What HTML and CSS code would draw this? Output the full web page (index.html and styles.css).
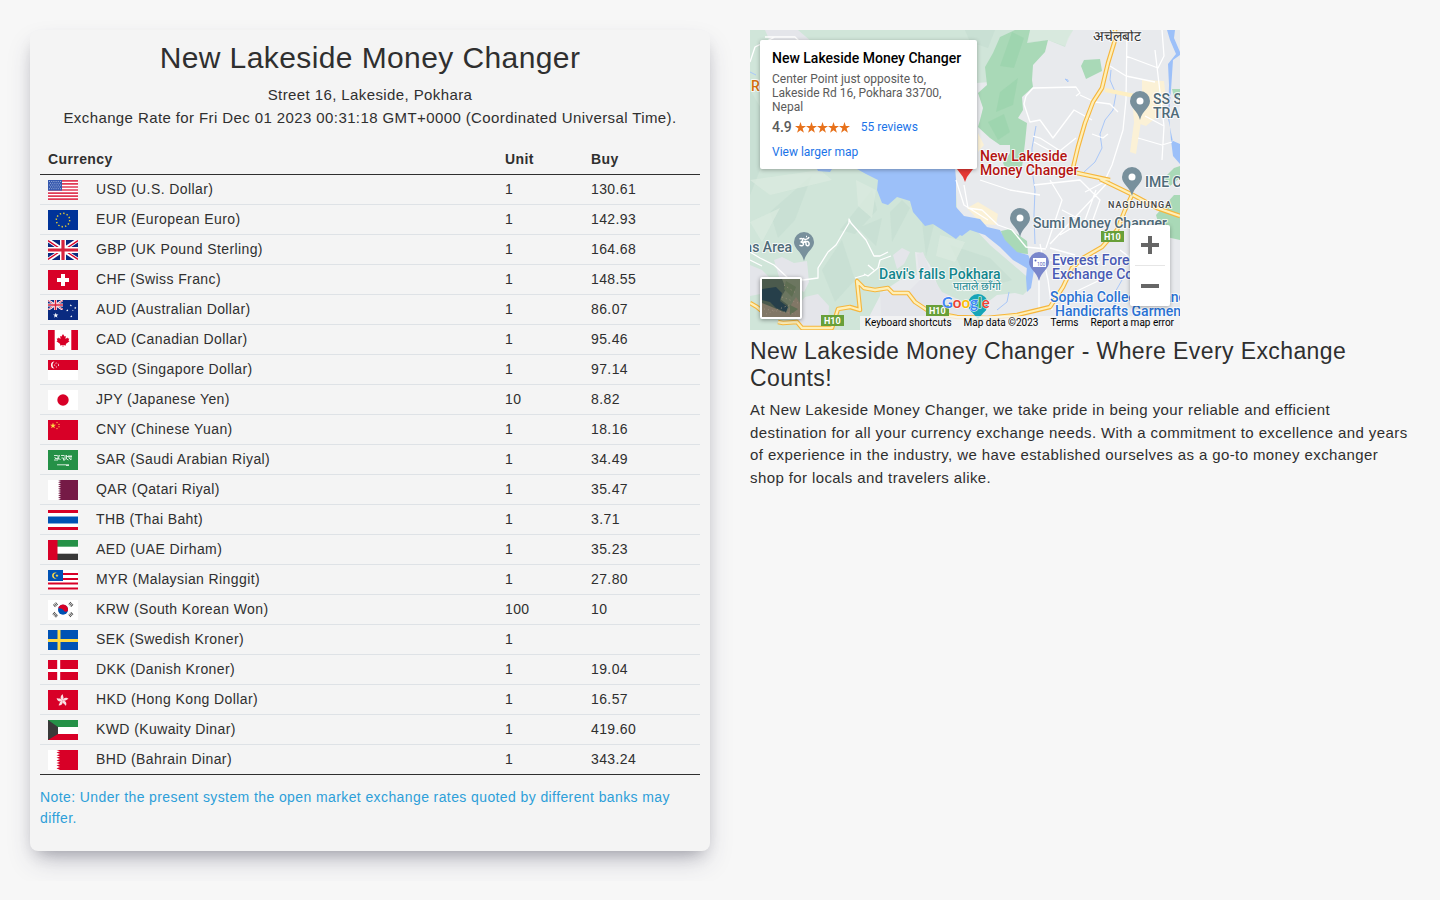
FILE: index.html
```html
<!DOCTYPE html>
<html lang="en">
<head>
<meta charset="utf-8">
<meta name="viewport" content="width=device-width, initial-scale=1">
<title>New Lakeside Money Changer</title>
<link rel="stylesheet" href="styles.css">
</head>
<body>
<svg class="defs" aria-hidden="true">
  <symbol id="jack" viewBox="0 0 30 20" preserveAspectRatio="none">
    <path fill="#0a2a80" d="M0 0h30v20H0z"/>
    <path stroke="#fff" stroke-width="4" d="M0 0l30 20M30 0L0 20"/>
    <path stroke="#d80027" stroke-width="1.3" d="M0 .6l13 8.700M30 19.400l-13-8.700M30 .6l-13 8.700M0 19.400l13-8.700"/>
    <path stroke="#fff" stroke-width="6" d="M15 0v20M0 10h30"/>
    <path stroke="#d8243e" stroke-width="3.200" d="M15 0v20M0 10h30"/>
  </symbol>
  <symbol id="star" viewBox="0 0 10 10"><path d="M5 0l1.200 3.700H10L6.900 6l1.200 3.700L5 7.400 1.900 9.700 3.100 6 0 3.700h3.800z"/></symbol>
  <symbol id="pin" viewBox="0 0 20 29"><path d="M10 0a10 10 0 0 0-10 10c0 7 7.500 9 10 19 2.500-10 10-12 10-19A10 10 0 0 0 10 0z"/></symbol>
</svg>
<main class="page">
  <section class="rates">
    <div class="card">
      <h1 class="title">New Lakeside Money Changer</h1>
      <p class="line">Street 16, Lakeside, Pokhara</p>
      <p class="line">Exchange Rate for Fri Dec 01 2023 00:31:18 GMT+0000 (Coordinated Universal Time).</p>
      <table class="table">
        <colgroup><col class="c-flag"><col><col class="c-unit"><col class="c-buy"></colgroup>
        <thead><tr><th colspan="2">Currency</th><th>Unit</th><th>Buy</th></tr></thead>
        <tbody>
          <tr><td class="flag"><svg viewBox="0 0 30 20"><path fill="#fff" d="M0 0h30v20H0z"/><path stroke="#e03a55" stroke-width="1.700" d="M0 .8h30M0 3.900h30M0 7h30M0 10h30M0 13.100h30M0 16.200h30M0 19.200h30"/><path fill="#3558ae" d="M0 0h14v10.600H0z"/><path stroke="#a9b9df" stroke-width=".9" stroke-dasharray="1 1.200" d="M1 1.500h12M2 3.300h11M1 5.100h12M2 6.900h11M1 8.700h12"/></svg></td><td>USD (U.S. Dollar)</td><td>1</td><td>130.61</td></tr>
          <tr><td class="flag"><svg viewBox="0 0 30 20"><path fill="#003399" d="M0 0h30v20H0z"/><circle cx="15" cy="10" r="6.700" fill="none" stroke="#e3cc34" stroke-width="1.400" stroke-dasharray="1.400 2.108"/></svg></td><td>EUR (European Euro)</td><td>1</td><td>142.93</td></tr>
          <tr><td class="flag"><svg viewBox="0 0 30 20"><use href="#jack" width="30" height="20"/></svg></td><td>GBP (UK Pound Sterling)</td><td>1</td><td>164.68</td></tr>
          <tr><td class="flag"><svg viewBox="0 0 30 20"><path fill="#d80027" d="M0 0h30v20H0z"/><path stroke="#fff" stroke-width="4" d="M15 4v12M9 10h12"/></svg></td><td>CHF (Swiss Franc)</td><td>1</td><td>148.55</td></tr>
          <tr><td class="flag"><svg viewBox="0 0 30 20"><path fill="#0a2a80" d="M0 0h30v20H0z"/><use href="#jack" width="15" height="10"/><g fill="#fff"><use href="#star" x="5" y="12.500" width="5.500" height="5.500"/><use href="#star" x="21.500" y="4" width="2.600" height="2.600"/><use href="#star" x="26" y="6.500" width="2.600" height="2.600"/><use href="#star" x="18" y="9" width="2.600" height="2.600"/><use href="#star" x="22" y="15" width="2.600" height="2.600"/><use href="#star" x="24" y="9.500" width="1.800" height="1.800"/></g></svg></td><td>AUD (Australian Dollar)</td><td>1</td><td>86.07</td></tr>
          <tr><td class="flag"><svg viewBox="0 0 30 20"><path fill="#fff" d="M0 0h30v20H0z"/><path fill="#d80027" d="M0 0h6.700v20H0zM23.300 0H30v20h-6.700zM15 4l1.500 2.600 1.300-.5-.3 3 2-1.500.4 1 1.400-.2-.8 2 1 .8-3.700 2.900.2 1.300-2.700-.4V17h-.6v-2l-2.700.4.2-1.300-3.700-2.900 1-.8-.8-2 1.400.2.400-1 2 1.500-.3-3 1.300.5z"/></svg></td><td>CAD (Canadian Dollar)</td><td>1</td><td>95.46</td></tr>
          <tr><td class="flag"><svg viewBox="0 0 30 20"><path fill="#fff" d="M0 0h30v20H0z"/><path fill="#d80027" d="M0 0h30v10H0z"/><path fill="#fff" d="M6.500 1.500a3.500 3.500 0 1 0 0 7 4 4 0 0 1 0-7z"/><circle cx="8.600" cy="5" r="2" fill="none" stroke="#fff" stroke-width="1" stroke-dasharray="1 1.510"/></svg></td><td>SGD (Singapore Dollar)</td><td>1</td><td>97.14</td></tr>
          <tr><td class="flag"><svg viewBox="0 0 30 20"><path fill="#fff" d="M0 0h30v20H0z"/><circle cx="15" cy="10" r="5.700" fill="#d80027"/></svg></td><td>JPY (Japanese Yen)</td><td>10</td><td>8.82</td></tr>
          <tr><td class="flag"><svg viewBox="0 0 30 20"><path fill="#d80027" d="M0 0h30v20H0z"/><g fill="#ffda44"><use href="#star" x="2" y="2.500" width="6" height="6"/><use href="#star" x="8" y="1.500" width="2" height="2"/><use href="#star" x="10" y="3.200" width="2" height="2"/><use href="#star" x="10" y="5.800" width="2" height="2"/><use href="#star" x="8" y="7.500" width="2" height="2"/></g></svg></td><td>CNY (Chinese Yuan)</td><td>1</td><td>18.16</td></tr>
          <tr><td class="flag"><svg viewBox="0 0 30 20"><path fill="#259147" d="M0 0h30v20H0z"/><path fill="none" stroke="#d5ebdb" stroke-width="1" d="M6 5.500h3.500M6.500 7.500l2 1M6 10h4M10 5v5M11.500 5l-1 3 2 2M13 5.500h3M13.500 8h2v2M17 5v5h-2M18.500 5v4l2 1M21 5v3l2 2M23 5v5M19 6.500h5M7 8.500h4M9 14.800h12M18 15.500h3"/></svg></td><td>SAR (Saudi Arabian Riyal)</td><td>1</td><td>34.49</td></tr>
          <tr><td class="flag"><svg viewBox="0 0 30 20"><path fill="#fff" d="M0 0h30v20H0z"/><path fill="#751a46" d="M30 0H10l3 1.100-3 1.100 3 1.100-3 1.100 3 1.100-3 1.100 3 1.100-3 1.100 3 1.100-3 1.100 3 1.100-3 1.100 3 1.100-3 1.100 3 1.100-3 1.100 3 1.100-3 1.300h20z"/></svg></td><td>QAR (Qatari Riyal)</td><td>1</td><td>35.47</td></tr>
          <tr><td class="flag"><svg viewBox="0 0 30 20"><path fill="#fff" d="M0 0h30v20H0z"/><path fill="#d80027" d="M0 0h30v3H0zM0 17h30v3H0z"/><path fill="#0052b4" d="M0 6.500h30v7H0z"/></svg></td><td>THB (Thai Baht)</td><td>1</td><td>3.71</td></tr>
          <tr><td class="flag"><svg viewBox="0 0 30 20"><path fill="#fff" d="M0 0h30v20H0z"/><path fill="#259147" d="M0 0h30v6.700H0z"/><path fill="#393939" d="M0 13.700h30V20H0z"/><path fill="#d80027" d="M0 0h9.500v20H0z"/></svg></td><td>AED (UAE Dirham)</td><td>1</td><td>35.23</td></tr>
          <tr><td class="flag"><svg viewBox="0 0 30 20"><path fill="#fff" d="M0 0h30v20H0z"/><path stroke="#d80027" stroke-width="2" d="M15 4h15M15 9h15M0 13.500h30M0 18.500h30"/><path fill="#0052b4" d="M0 0h15v11H0z"/><path fill="#ffda44" d="M7.500 2.500a3.100 3.100 0 1 0 1.500 5.600 2.600 2.600 0 1 1 0-5z"/><use href="#star" x="7.200" y="3.700" width="3.500" height="3.500" fill="#ffda44"/></svg></td><td>MYR (Malaysian Ringgit)</td><td>1</td><td>27.80</td></tr>
          <tr><td class="flag"><svg viewBox="0 0 30 20"><path fill="#fff" d="M0 0h30v20H0z"/><circle cx="15" cy="9.700" r="5" fill="#0052b4"/><path fill="#d80027" d="M10.200 8.300a5 5 0 0 1 9.700 2.500c-1.500 1.600-3.500 1.200-4.600-.8-1.200-1.900-3.600-1.500-5.100-1.700z"/><g stroke="#444" stroke-width="3.200" stroke-dasharray=".9 .6"><path d="M6 6l3-2.500M21.500 3l3 3M5.500 13l3.500 3.500M21.500 16l3-3"/></g></svg></td><td>KRW (South Korean Won)</td><td>100</td><td>10</td></tr>
          <tr><td class="flag"><svg viewBox="0 0 30 20"><path fill="#0052b4" d="M0 0h30v20H0z"/><path stroke="#ffda44" stroke-width="3" d="M11 0v20M0 10.500h30"/></svg></td><td>SEK (Swedish Kroner)</td><td>1</td><td></td></tr>
          <tr><td class="flag"><svg viewBox="0 0 30 20"><path fill="#d80027" d="M0 0h30v20H0z"/><path stroke="#fff" stroke-width="3" d="M10.700 0v20M0 10.500h30"/></svg></td><td>DKK (Danish Kroner)</td><td>1</td><td>19.04</td></tr>
          <tr><td class="flag"><svg viewBox="0 0 30 20"><path fill="#d80027" d="M0 0h30v20H0z"/><g transform="translate(14.500 10.500)" fill="#f9dfe4"><path id="petal" d="M0 0c-2.500-1.500-2.500-5 .5-6.300-.5 2 1.800 3.500-.5 6.300z"/><use href="#petal" transform="rotate(72)"/><use href="#petal" transform="rotate(144)"/><use href="#petal" transform="rotate(216)"/><use href="#petal" transform="rotate(288)"/></g></svg></td><td>HKD (Hong Kong Dollar)</td><td>1</td><td>16.57</td></tr>
          <tr><td class="flag"><svg viewBox="0 0 30 20"><path fill="#fff" d="M0 0h30v20H0z"/><path fill="#259147" d="M0 0h30v7H0z"/><path fill="#d80027" d="M0 14h30v6H0z"/><path fill="#393939" d="M0 0l10 7v7L0 20z"/></svg></td><td>KWD (Kuwaity Dinar)</td><td>1</td><td>419.60</td></tr>
          <tr><td class="flag"><svg viewBox="0 0 30 20"><path fill="#fff" d="M0 0h30v20H0z"/><path fill="#d80027" d="M30 0H8.500L12 1.300 8.500 2.600 12 3.900 8.500 5.200 12 6.500 8.500 7.800 12 9.100 8.500 10.400 12 11.700 8.500 13 12 14.300 8.500 15.600 12 16.900 8.500 18.200 12 20h18z"/></svg></td><td>BHD (Bahrain Dinar)</td><td>1</td><td>343.24</td></tr>
        </tbody>
      </table>
      <p class="note">Note: Under the present system the open market exchange rates quoted by different banks may differ.</p>
    </div>
  </section>
  <section class="about">
    <div class="map">
      <svg class="map-art" viewBox="0 0 430 300" role="img" aria-label="Map of Pokhara">
        <path fill="#e8eaed" d="M0 0h430v300H0z"/>
        <path fill="#d0e5d9" d="M0 0H323L318 8 315 17 298 10 277 13 270 40 240 52 227 53 226 139 205 139 207 180 240 215 275 245 281 250 278 260 273 265 265 263 247 265 230 278 210 274 190 262 180 235 172 223 165 222 167 245 150 250 132 262 120 285 120 300H0z"/>
        <path fill="#c3ddcf" opacity=".55" d="M0 60L12 80 10 140 0 165zM20 182L62 145 45 190 28 208zM90 200L122 160 127 180 105 204zM72 240L92 210 105 250 85 272zM140 182L152 170 160 178 142 212zM172 192L185 190 176 226zM108 198L132 188 126 216zM215 0H245L238 18 220 12zM200 215L240 228 262 250 235 258 212 240z"/>
        <path fill="#dcebe0" opacity=".7" d="M280 0H323L315 16 298 10 278 12zM0 150L70 140 82 150 20 165zM106 150L126 160 122 188 108 176zM0 192L30 178 12 212zM190 205L215 212 205 232 186 226z"/>
        <path fill="#e4e5ea" d="M24 230L32 227 44 233 57 231 59 252 54 262 30 250zM0 235L12 240 22 250 20 262 0 266zM55 267L68 264 79 276 78 292 66 298 50 296 44 280zM143 225L152 218 160 222 154 234 147 239zM167 224L173 222 182 246 192 262 214 272 232 276V300H200L165 280 158 262 170 250zM15 0H48L62 12 22 16zM130 262L160 262 180 282V300H132z"/>
        <path fill="#a9d9b7" d="M250 7L265 0H280L277 13 298 10 295 22 283 35 282 50 283 57 272 67 273 80 268 88 277 93 275 113 272 137H255L253 133 260 123V115H250L240 108 228 97 230 90 233 78 228 63 237 55 235 37 243 23z"/>
        <path fill="#98d2aa" opacity=".6" d="M262 2L274 8 264 38 250 36zM250 62L268 48 263 75 246 82zM238 92L254 84 260 102 248 110z"/>
        <path fill="#a9d9b7" d="M331 36L334 30 350 29 352 41 336 49zM251 201L260 199 277 211 278 224 266 223 253 212zM406 185L424 165H430V210L412 206zM422 59H430V67H424zM414 148L424 138 430 136V148L420 156z"/>
        <path fill="#fff2cf" opacity=".8" d="M392 50L414 51 416 68 408 86 396 96 384 92 383 78 392 66zM385 85H392L386 124 380 122zM217 178L228 172 248 184 246 195 232 194zM228 103L234 115 228 122z"/>
        <path fill="#9cc0f9" d="M66 137H205L206 150 206 177 214 186 230 189 237 197 250 200 255 210 267 222 278 225 281 232 283 240 277 250 278 261 281 249 280 240 263 230 250 217 235 205 220 200 212 206 210 205 206 209 197 203 183 194 175 196 163 182 160 171 147 167 138 175 132 173 127 160 128 150 116 144 107 139 82 139 80 142 68 141z"/>
        <path fill="#9cc0f9" d="M278 225L284 240 281 258 277 262 276 248zM421 110L430 114V134L423 126zM417 0H425L424 8 430 22V25L423 30 421 60 419 86 421 110 423 112 418 88 419 55 418 34 426 24 420 10z"/>
        <path fill="none" stroke="#a9c7f8" d="M361 40L360 50 366 64 363 80 355 90 350 104 352 118 345 132 334 142M286 96L282 118 282 140 285 160 284 185 285 214M247 280L257 272 259 262M372 250L364 264 366 284M0 42L6 45M315 49L318 52 318 50z"/>
        <path fill="none" stroke="#fff" stroke-width="1.300" stroke-linejoin="round" d="M15 7H45L53 15M0 32L5 17 25 7M53 250L68 248 68 238 78 222 86 215 99 193 99 189 101 193 116 210 124 226 130 226 138 222M141 226L130 230 128 238 118 246 114 244M118 235L124 240M115 245L105 248M53 250L38 248 24 235 10 228 0 222M0 230L12 236M276 66L283 58 326 57 330 63 326 66M276 66L274 74 280 92 290 90 303 108 324 80 342 90M283 106L290 108 312 122M284 112L306 124 326 108M330 65L345 72 360 74 368 82M377 0L376 70 373 100 362 135 355 150M376 26L408 38 414 26 412 0M360 36L376 46 405 52M342 104L353 108 358 104M395 86L414 96 412 130M405 20L414 96M388 108L412 115 422 112M206 150L214 175 238 190M214 155L218 178 232 180 248 195 262 200 276 217 296 219M300 214L360 150M296 218L312 170 300 150M335 162L358 150M284 155L330 150 350 170 340 198M290 214L298 250 302 280M289 250V280M300 230L330 236 350 232M335 240L350 250 358 240M312 280L345 288 400 290M346 160L335 190 310 205M312 180L360 205M325 225L300 218M370 220L410 250M325 262L350 250M230 150L260 160 290 165"/>
        <g fill="none" stroke-linejoin="round">
          <path stroke="#f6b63c" stroke-width="4.500" d="M365 0V10L358 33 352 58 343 72 335 93 328 117 322 142 327 143 360 150M350 149L383 165 407 178 430 186M382 165L375 180 367 200 352 217 333 228 322 238 313 257 300 277 267 285 237 288 207 287 180 282 165 272 158 263H143L138 258 125 260 114 258 107 251 110 280 100 277 88 279 82 298H60L52 298 47 292 33 293 28 292M0 273L7 277 13 282"/>
          <path stroke="#feefb8" stroke-width="2.300" d="M365 0V10L358 33 352 58 343 72 335 93 328 117 322 142 327 143 360 150M350 149L383 165 407 178 430 186M382 165L375 180 367 200 352 217 333 228 322 238 313 257 300 277 267 285 237 288 207 287 180 282 165 272 158 263H143L138 258 125 260 114 258 107 251 110 280 100 277 88 279 82 298H60L52 298 47 292 33 293 28 292M0 273L7 277 13 282"/>
        </g>
        <path fill="none" stroke="#feefc3" stroke-width="4" d="M355 60L385 66"/>
        <g fill="#78909c"><use href="#pin" x="380" y="61" width="20" height="29"/><use href="#pin" x="372" y="137" width="20" height="29"/><use href="#pin" x="260" y="178" width="20" height="29"/><use href="#pin" x="44" y="202" width="20" height="29"/></g>
        <g fill="#fff"><circle cx="390" cy="71" r="3.500"/><circle cx="382" cy="147" r="3.500"/><circle cx="270" cy="188" r="3.500"/><path fill="none" stroke="#fff" stroke-width="1.500" d="M49.500 209c4-2 4 3 1 3 5 0 3 6-1 3M53 213c2-3 3-2 3 1s4 2 3-1-4-1-4 0M53 208c1 2 5 2 6-1M56 206.500h1"/></g>
        <use href="#pin" x="279" y="222" width="20" height="29" fill="#7986cb"/><path fill="#fff" d="M283 228h13v9h-13z"/><text class="tiny" x="287" y="236">100</text><circle cx="285.500" cy="230.500" r="1" fill="#5c6bc0"/>
        <circle cx="228" cy="274" r="10" fill="#16a5b7"/><path fill="#16a5b7" d="M220 280h16l-8 9z"/>
        <path fill="#e53935" d="M207 139h16l-6 8-2 5-2-5z"/><path fill="#b31412" d="M226 126q2 4 0 7z"/>
        <path fill="#689f38" d="M351 201h23v11h-23zM176 275h23v11h-23zM71 285h23v11H71z"/>
        <g class="shield"><text x="354" y="210">H10</text><text x="179" y="284">H10</text><text x="74" y="294">H10</text></g>
        <g class="label">
          <text class="red" x="230" y="131">New Lakeside</text><text class="red" x="230" y="145">Money Changer</text>
          <text class="slate" x="403" y="74">SS STORE</text><text class="slate" x="403" y="88">TRADERS</text>
          <text class="slate" x="395" y="157">IME Center</text><text class="slate" x="283" y="198">Sumi Money Changer</text>
          <text class="slate" x="42" y="222" text-anchor="end">Annapurnas Area</text>
          <text class="indigo" x="302" y="235">Everest Foreign</text><text class="indigo" x="302" y="249">Exchange Counter</text>
          <text class="blue" x="300" y="272">Sophia Collection and</text><text class="blue" x="305" y="286">Handicrafts Garments</text>
          <text class="teal" x="129" y="249">Davi's falls Pokhara</text><text class="teal small" x="203" y="260">पाताले छाँगो</text>
          <text class="orange" x="1" y="61">R</text><text class="ink" x="343" y="11">अचेलबोट</text>
          <text class="town" x="358" y="178">NAGDHUNGA</text>
        </g>
        <text class="google" x="192" y="278"><tspan fill="#4285f4">G</tspan><tspan fill="#ea4335">o</tspan><tspan fill="#fbbc05">o</tspan><tspan fill="#4285f4">g</tspan><tspan fill="#34a853">l</tspan><tspan fill="#ea4335">e</tspan></text>
      </svg>
      <div class="place">
        <strong class="place-name">New Lakeside Money Changer</strong>
        <p class="place-address">Center Point just opposite to, Lakeside Rd 16, Pokhara 33700, Nepal</p>
        <div class="place-rating"><span class="score">4.9</span><svg class="stars" viewBox="0 0 55 11" aria-label="5 stars"><use href="#star" width="11" height="11"/><use href="#star" x="11" width="11" height="11"/><use href="#star" x="22" width="11" height="11"/><use href="#star" x="33" width="11" height="11"/><use href="#star" x="44" width="11" height="11"/></svg><a class="map-link" href="#">55 reviews</a></div>
        <a class="map-link larger" href="#">View larger map</a>
      </div>
      <button class="satellite" type="button" aria-label="Show satellite imagery"><svg viewBox="0 0 38 38"><path fill="#4b5a4d" d="M0 0h38v38H0z"/><path fill="#6c7660" d="M20 0h18v38H22l4-12-8-6 6-10z"/><path fill="#817766" d="M0 24l10 4 14 6 10-16 4 6v14H0z"/><path fill="#5f6e53" d="M24 2l10 6-4 10-8-8zM28 26l8 4-8 6z"/><path fill="#263f4a" d="M0 10l14-2 6 6-2 8 8 6-2 5-10-4-6-6-8-2z"/><path stroke="#9a8c7c" stroke-dasharray="1 3" d="M2 30l32 5M20 18l16 6M22 6l12 8M4 35l26-10"/></svg></button>
      <div class="zoom">
        <button class="zoom-btn" type="button" aria-label="Zoom in"><svg viewBox="0 0 18 18"><path d="M7 0h4v7h7v4h-7v7H7v-7H0V7h7z"/></svg></button>
        <button class="zoom-btn" type="button" aria-label="Zoom out"><svg viewBox="0 0 18 18"><path d="M0 7h18v4H0z"/></svg></button>
      </div>
      <div class="credits"><button class="credit" type="button">Keyboard shortcuts</button><span>Map data ©2023</span><a class="credit" href="#">Terms</a><a class="credit" href="#">Report a map error</a></div>
    </div>
    <h2 class="tagline">New Lakeside Money Changer - Where Every Exchange Counts!</h2>
    <p class="intro">At New Lakeside Money Changer, we take pride in being your reliable and efficient destination for all your currency exchange needs. With a commitment to excellence and years of experience in the industry, we have established ourselves as a go-to money exchanger shop for locals and travelers alike.</p>
  </section>
</main>
</body>
</html>
```
FILE: styles.css
```css
* { box-sizing: border-box; }
body {
  margin: 0;
  background: #f7f7f7;
  color: #2f2f2f;
  font: 15px/1.5 "Liberation Sans", Arial, sans-serif;
  letter-spacing: 0.4px;
}
h1, h2, p { margin: 0; font-weight: 400; }
.defs { display: none; }
.page { display: grid; grid-template-columns: 1fr 1fr; align-items: start; }
.rates { padding: 30px 10px 30px 30px; }
.about { padding: 30px; }
.card {
  padding: 10px 10px 22px;
  border-radius: 8px;
  background: #f4f4f4;
  box-shadow: 0 13px 27px -5px rgba(50, 50, 93, 0.25), 0 8px 16px -8px rgba(0, 0, 0, 0.3);
}
.title { margin-bottom: 8px; font-size: 30px; line-height: 36px; text-align: center; }
.line { text-align: center; }

.table {
  width: 100%;
  margin: 15px 0 12px;
  border-collapse: collapse;
  border-bottom: 1px solid #2f2f2f;
  table-layout: fixed;
  font-size: 14px;
  line-height: 21px;
}
.c-flag { width: 48px; }
.c-unit { width: 86px; }
.c-buy { width: 117px; }
.table th, .table td { height: 30px; padding: 4px 8px; border-bottom: 1px solid #dee2e6; text-align: left; }
.table th { padding: 5px 8px 3px; border-bottom-color: #2f2f2f; }
.table tr:last-child td { border-bottom-color: #2f2f2f; }
.table .flag { padding: 5px 8px 4px; }
.table .flag svg { display: block; width: 30px; height: 20px; }
.note { color: #2d9fd9; font-size: 14px; line-height: 21px; }

.map {
  position: relative;
  max-width: 430px;
  overflow: hidden;
  font-family: Roboto, sans-serif;
  letter-spacing: normal;
}
.map-art { display: block; width: 100%; }
.label text { font-size: 14px; font-weight: 500; stroke: #fff; stroke-width: 2px; stroke-opacity: 0.8; paint-order: stroke; stroke-linejoin: round; }
.red { fill: #b31412; }
.slate { fill: #4f6a78; }
.indigo { fill: #4a5bb5; }
.blue { fill: #2a72d4; }
.teal { fill: #12858d; }
.orange { fill: #d56e0c; }
.ink { fill: #333; }
.label .small { font-size: 11px; font-weight: 400; }
.label .town { fill: #444; font-size: 9px; letter-spacing: 1px; }
.shield text { fill: #fff; font-size: 9px; font-weight: 700; }
.tiny { fill: #5c6bc0; font-size: 5px; }
.google { font-family: Lato, sans-serif; font-size: 15px; font-weight: 700; stroke: #fff; stroke-width: 1px; paint-order: stroke; }
.place {
  position: absolute;
  top: 10px;
  left: 10px;
  width: 217px;
  padding: 9px 12px 8px;
  border-radius: 2px;
  background: #fff;
  box-shadow: 0 1px 4px rgba(0, 0, 0, 0.3);
  color: #5b5b5b;
  font-size: 12px;
  line-height: 14px;
}
.place-name { display: block; color: #000; font-size: 14px; font-weight: 500; line-height: 18px; white-space: nowrap; }
.place-address { margin-top: 5px; width: 180px; }
.place-rating { display: flex; align-items: center; margin-top: 4px; line-height: 18px; }
.score { font-size: 14px; font-weight: 500; }
.stars { width: 55px; height: 11px; margin: 0 11px 0 3px; fill: #e7711b; }
.map-link { color: #1a73e8; text-decoration: none; }
.larger { display: block; margin-top: 7px; line-height: 18px; }
.satellite {
  position: absolute;
  left: 10px;
  bottom: 11px;
  width: 42px;
  height: 42px;
  padding: 2px;
  border: 0;
  border-radius: 2px;
  background: #fff;
  box-shadow: 0 1px 4px rgba(0, 0, 0, 0.4);
}
.satellite svg { display: block; }
.zoom { position: absolute; right: 10px; bottom: 24px; width: 40px; padding: 0 5px; border-radius: 2px; background: #fff; box-shadow: 0 1px 4px rgba(0, 0, 0, 0.3); }
.zoom-btn { display: flex; align-items: center; justify-content: center; width: 100%; height: 40px; padding: 0; border: 0; background: none; }
.zoom-btn + .zoom-btn { height: 41px; border-top: 1px solid #e6e6e6; }
.zoom-btn svg { width: 18px; height: 18px; fill: #666; }
.credits {
  position: absolute;
  right: 0;
  bottom: 0;
  display: flex;
  gap: 12px;
  padding: 0 6px 0 5px;
  background: rgba(245, 245, 245, 0.8);
  color: #000;
  font-size: 10px;
  line-height: 14px;
  white-space: nowrap;
}
.credit { padding: 0; border: 0; background: none; color: inherit; font: inherit; text-decoration: none; }

.tagline { margin: 8px 0 7px; font-size: 23px; line-height: 27px; }
```
